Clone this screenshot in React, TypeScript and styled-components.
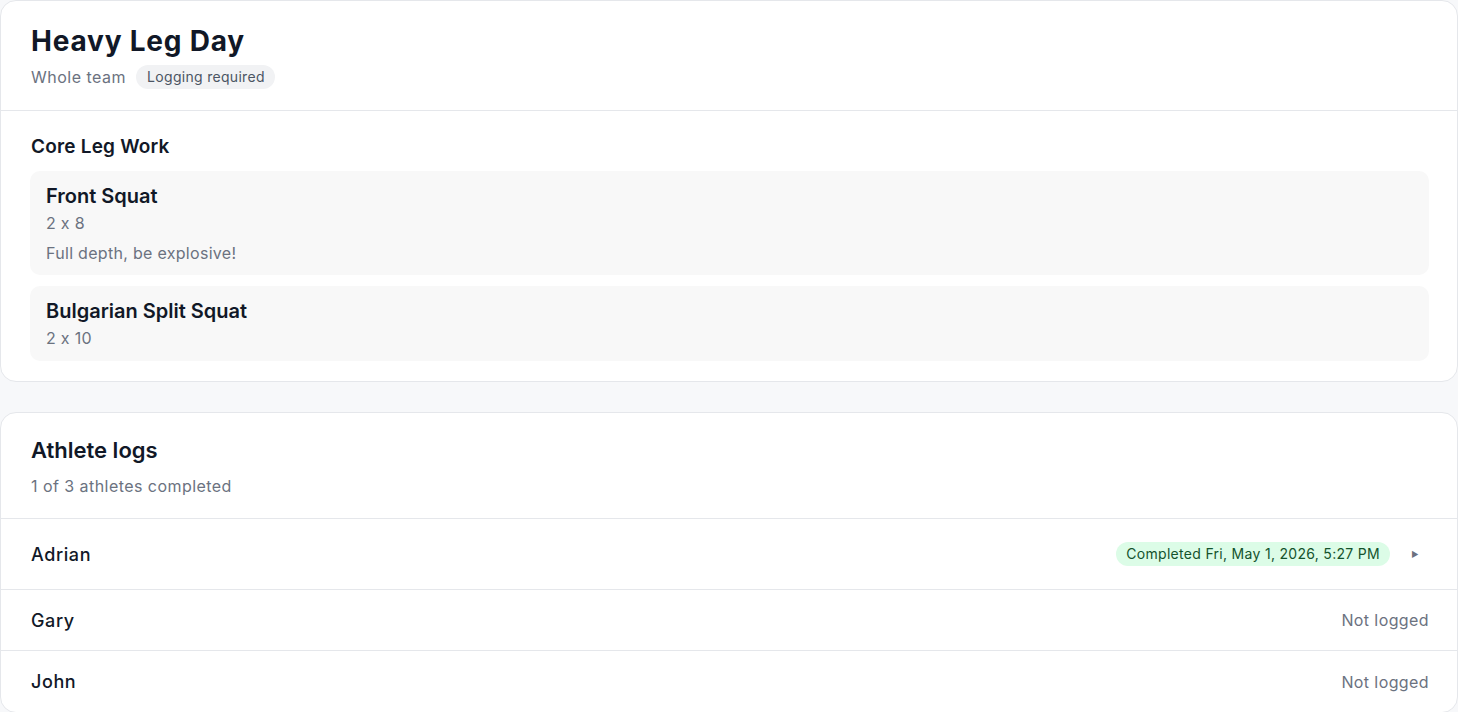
import * as React from "react";
import styled, { createGlobalStyle } from "styled-components";

const GlobalStyle = createGlobalStyle`
  html, body {
    margin: 0;
    padding: 0;
    background: #f7f8fa;
    font-family: Inter, "Noto Sans", sans-serif;
    font-feature-settings: "calt" 0;
    color: #111827;
  }
  * {
    box-sizing: border-box;
  }
`;

const exercises = [
  { name: "Front Squat", scheme: "2 x 8", note: "Full depth, be explosive!" },
  { name: "Bulgarian Split Squat", scheme: "2 x 10" },
];

const athletes = [
  { name: "Adrian", completed: "Completed Fri, May 1, 2026, 5:27 PM" },
  { name: "Gary" },
  { name: "John" },
];

const Page = styled.div`
  display: flex;
  flex-direction: column;
  gap: 30px;
`;

const Card = styled.section`
  background: #fff;
  border: 1px solid #e5e7eb;
  border-radius: 16px;
  overflow: hidden;
`;

const Header = styled.div`
  padding: 22px 30px 21px;
  border-bottom: 1px solid #e5e7eb;
`;

const Title = styled.h1`
  margin: 0;
  font-size: 28px;
  font-weight: 700;
  line-height: 36px;
  letter-spacing: 0.8px;
`;

const Meta = styled.div`
  display: flex;
  align-items: center;
  gap: 10px;
  margin-top: 6px;
  font-size: 16px;
  letter-spacing: 0.5px;
  color: #6b7280;
`;

const Badge = styled.span`
  background: #f1f2f4;
  color: #4b5563;
  font-size: 14px;
  letter-spacing: 0.3px;
  line-height: 24px;
  padding: 0 10px 0 11px;
  border-radius: 999px;
`;

const Section = styled.div`
  padding: 24px 28px 20px 29px;
`;

const SectionTitle = styled.h2`
  margin: 0 0 12px 1px;
  font-size: 19px;
  font-weight: 600;
  line-height: 24px;
  letter-spacing: 0.2px;
`;

const ExerciseList = styled.div`
  display: flex;
  flex-direction: column;
  gap: 11px;
`;

const Exercise = styled.div`
  background: #f8f8f8;
  border-radius: 10px;
  padding: 12px 16px 9px;
`;

const ExerciseName = styled.div`
  font-size: 20px;
  font-weight: 600;
  line-height: 26px;
`;

const Scheme = styled.div`
  font-size: 16px;
  letter-spacing: 0.3px;
  color: #6b7280;
  line-height: 28px;
`;

const Note = styled.div`
  font-size: 16px;
  letter-spacing: 0.3px;
  color: #6b7280;
  line-height: 24px;
  margin: 4px 0 1px;
`;

const LogsHeader = styled.div`
  padding: 23px 30px 21px;
  border-bottom: 1px solid #e5e7eb;
`;

const LogsTitle = styled.h2`
  margin: 0;
  font-size: 22px;
  font-weight: 600;
  line-height: 28px;
`;

const LogsSub = styled.div`
  margin-top: 11px;
  font-size: 16px;
  letter-spacing: 0.45px;
  color: #6b7280;
  line-height: 22px;
`;

const Row = styled.div<{ $tall?: boolean }>`
  display: flex;
  align-items: center;
  justify-content: space-between;
  height: ${(p) => (p.$tall ? 71 : 61)}px;
  padding: 0 28px 0 30px;
  border-bottom: 1px solid #e5e7eb;

  &:last-child {
    border-bottom: none;
  }
`;

const Name = styled.span`
  font-size: 18px;
  font-weight: 500;
  letter-spacing: 0.6px;
`;

const Status = styled.div`
  display: flex;
  align-items: center;
  gap: 13px;
  margin-right: 2px;
`;

const Done = styled.span`
  background: #dcfce7;
  color: #14532d;
  font-size: 14px;
  letter-spacing: 0.3px;
  line-height: 24px;
  padding: 0 10px;
  border-radius: 999px;
`;

const Caret = styled.span`
  color: #6b7280;
  font-size: 8px;
  width: 24px;
  text-align: center;
`;

const Muted = styled.span`
  font-size: 16px;
  letter-spacing: 0.4px;
  color: #6b7280;
`;

const App = () => (
  <>
    <GlobalStyle />
    <Page>
      <Card>
        <Header>
          <Title>Heavy Leg Day</Title>
          <Meta>
            Whole team
            <Badge>Logging required</Badge>
          </Meta>
        </Header>
        <Section>
          <SectionTitle>Core Leg Work</SectionTitle>
          <ExerciseList>
            {exercises.map((e) => (
              <Exercise key={e.name}>
                <ExerciseName>{e.name}</ExerciseName>
                <Scheme>{e.scheme}</Scheme>
                {e.note && <Note>{e.note}</Note>}
              </Exercise>
            ))}
          </ExerciseList>
        </Section>
      </Card>

      <Card>
        <LogsHeader>
          <LogsTitle>Athlete logs</LogsTitle>
          <LogsSub>1 of 3 athletes completed</LogsSub>
        </LogsHeader>
        {athletes.map((a) => (
          <Row key={a.name} $tall={!!a.completed}>
            <Name>{a.name}</Name>
            {a.completed ? (
              <Status>
                <Done>{a.completed}</Done>
                <Caret>▶</Caret>
              </Status>
            ) : (
              <Muted>Not logged</Muted>
            )}
          </Row>
        ))}
      </Card>
    </Page>
  </>
);

export default App;
